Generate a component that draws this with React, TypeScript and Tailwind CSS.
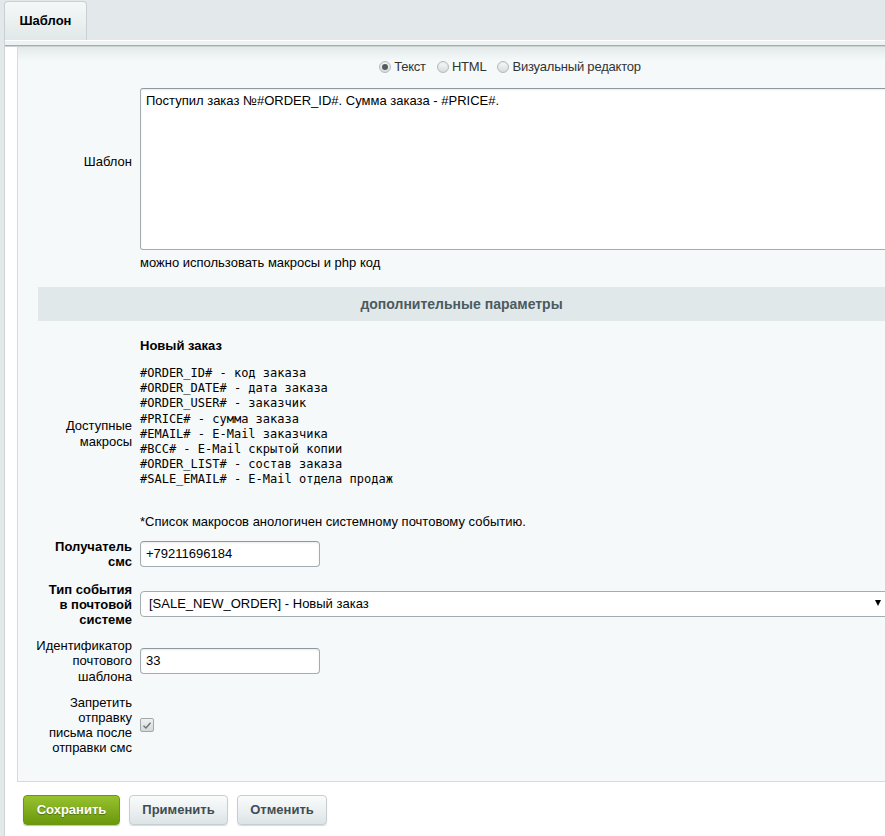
import React from "react";

const macros = [
  "#ORDER_ID# - код заказа",
  "#ORDER_DATE# - дата заказа",
  "#ORDER_USER# - заказчик",
  "#PRICE# - сумма заказа",
  "#EMAIL# - E-Mail заказчика",
  "#BCC# - E-Mail скрытой копии",
  "#ORDER_LIST# - состав заказа",
  "#SALE_EMAIL# - E-Mail отдела продаж",
];

function Radio({ checked, label }: { checked?: boolean; label: string }) {
  return (
    <label className="flex items-center gap-[3px]">
      <span className="w-[12px] h-[12px] rounded-full border border-[#b3bbbe] bg-gradient-to-b from-[#fafbfb] to-[#d5dbdc] flex items-center justify-center shadow-[inset_0_1px_1px_rgba(0,0,0,0.08)]">
        {checked && <span className="w-[6px] h-[6px] rounded-full bg-[#555b5d]" />}
      </span>
      <span className="text-[#333] tracking-[-0.2px]">{label}</span>
    </label>
  );
}

export default function App() {
  return (
    <div
      className="w-[885px] h-[836px] overflow-hidden bg-[#e3e9eb] text-[13px] text-black"
      style={{ fontFamily: '"Liberation Sans", Arial, sans-serif' }}
    >
      <div className="flex items-end h-[40px] pl-[4px]">
        <div className="w-[83px] h-[39px] rounded-t-[4px] border border-b-0 border-[#c7d0d2] bg-gradient-to-b from-[#f5f8f8] to-[#e1e8e9] flex items-center justify-center font-bold text-black">
          Шаблон
        </div>
      </div>
      <div className="ml-[4px] w-[900px] bg-white border-l border-[#cdd5d7]">
        <div className="h-[5px] border-t border-white bg-[#eef2f3]" />
        <div className="h-[2px] bg-[#a3acaf] border-b border-[#cbd3d5]" />
        <div className="pl-[12px]">
          <div className="w-[880px] border-l border-b border-[#d3dbdd] bg-[linear-gradient(to_bottom,#e3e9ea_0px,#f5f9f9_14px,#f5f9f9_100%)] pb-[26px]">
            {/* Row A */}
            <div className="flex items-center gap-[8px] pt-[12px]">
              <div className="w-[114px] text-right leading-[15px] pb-[6px]">Шаблон</div>
              <div className="flex-1 pr-[4px]">
                <div className="flex justify-center gap-[11px] leading-[16px] pr-[13px]">
                  <Radio checked label="Текст" />
                  <Radio label="HTML" />
                  <Radio label="Визуальный редактор" />
                </div>
                <div className="mt-[13px] h-[162px] rounded-[3px] border border-[#a3adb1] border-t-[#8f999d] bg-white px-[5px] pt-[4px] leading-[16px] shadow-[inset_0_1px_2px_rgba(0,0,0,0.08)]">
                  Поступил заказ №#ORDER_ID#. Сумма заказа - #PRICE#.
                </div>
                <div className="mt-[5px] leading-[15px]">можно использовать макросы и php код</div>
              </div>
            </div>

            {/* Header */}
            <div className="mt-[17px] ml-[20px] mr-[12px] h-[34px] bg-[#e0e8ea] flex items-center justify-center font-bold text-[14px] text-[#4b5a5f]">
              дополнительные параметры
            </div>

            {/* Row B */}
            <div className="flex items-center gap-[8px] mt-[17px]">
              <div className="w-[114px] text-right leading-[16px]">
                Доступные
                <br />
                макросы
              </div>
              <div className="flex-1">
                <div className="font-bold leading-[16px]">Новый заказ</div>
                <div
                  className="mt-[12px] text-[12px] leading-[15.2px] whitespace-pre"
                  style={{ fontFamily: '"DejaVu Sans Mono", monospace' }}
                >
                  {macros.map((m) => (
                    <div key={m}>{m}</div>
                  ))}
                </div>
                <div className="mt-[26px] leading-[16px]">*Список макросов анологичен системному почтовому событию.</div>
              </div>
            </div>

            {/* Row C */}
            <div className="flex items-center gap-[8px] mt-[9px]">
              <div className="w-[114px] text-right leading-[15px] font-bold">
                Получатель
                <br />
                смс
              </div>
              <div className="w-[180px] h-[26px] rounded-[4px] border border-[#a3adb1] border-t-[#8f999d] bg-white px-[5px] flex items-center shadow-[inset_0_1px_2px_rgba(0,0,0,0.08)]">
                +79211696184
              </div>
            </div>

            {/* Row D */}
            <div className="flex items-center gap-[8px] mt-[13px]">
              <div className="w-[114px] text-right leading-[15px] font-bold">
                Тип события
                <br />
                в почтовой
                <br />
                системе
              </div>
              <div className="flex-1 pr-[4px]">
                <div className="relative h-[26px] rounded-[4px] border border-[#a3adb1] bg-white pl-[8px] flex items-center">
                  [SALE_NEW_ORDER] - Новый заказ
                  <span className="absolute right-[11px] top-[8px] w-0 h-0 border-l-[3.5px] border-r-[3.5px] border-t-[6px] border-l-transparent border-r-transparent border-t-black" />
                </div>
              </div>
            </div>

            {/* Row E */}
            <div className="flex items-center gap-[8px] mt-[11px]">
              <div className="w-[114px] text-right leading-[15.5px]">
                Идентификатор
                <br />
                почтового
                <br />
                шаблона
              </div>
              <div className="w-[180px] h-[26px] rounded-[4px] border border-[#a3adb1] border-t-[#8f999d] bg-white px-[5px] flex items-center shadow-[inset_0_1px_2px_rgba(0,0,0,0.08)]">
                33
              </div>
            </div>

            {/* Row F */}
            <div className="flex items-center gap-[8px] mt-[11px]">
              <div className="w-[114px] text-right leading-[15px]">
                Запретить
                <br />
                отправку
                <br />
                письма после
                <br />
                отправки смс
              </div>
              <div className="w-[14px] h-[14px] rounded-[2px] border border-[#9fa8ab] bg-gradient-to-b from-[#eef1f2] to-[#d3d9db] flex items-center justify-center">
                <svg width="10" height="9" viewBox="0 0 10 9">
                  <path d="M1.5 4.8 L4 7 L8.5 1.8" fill="none" stroke="#6b7476" strokeWidth="1.4" />
                </svg>
              </div>
            </div>
          </div>

          {/* Buttons */}
          <div className="flex gap-[9px] pt-[13px] pl-[6px] pb-[20px]">
            <button className="w-[97px] h-[30px] rounded-[4px] border border-[#6e950f] bg-gradient-to-b from-[#97c22e] to-[#6b990b] text-white font-bold shadow-[0_1px_1px_rgba(0,0,0,0.25)] [text-shadow:0_1px_1px_rgba(0,0,0,0.35)]">
              Сохранить
            </button>
            <button className="w-[99px] h-[30px] rounded-[4px] border border-[#c6ced1] bg-gradient-to-b from-[#fafcfc] to-[#dde4e6] text-[#3f4d52] font-bold shadow-[0_1px_1px_rgba(0,0,0,0.15)]">
              Применить
            </button>
            <button className="w-[90px] h-[30px] rounded-[4px] border border-[#c6ced1] bg-gradient-to-b from-[#fafcfc] to-[#dde4e6] text-[#3f4d52] font-bold shadow-[0_1px_1px_rgba(0,0,0,0.15)]">
              Отменить
            </button>
          </div>
        </div>
      </div>
    </div>
  );
}
